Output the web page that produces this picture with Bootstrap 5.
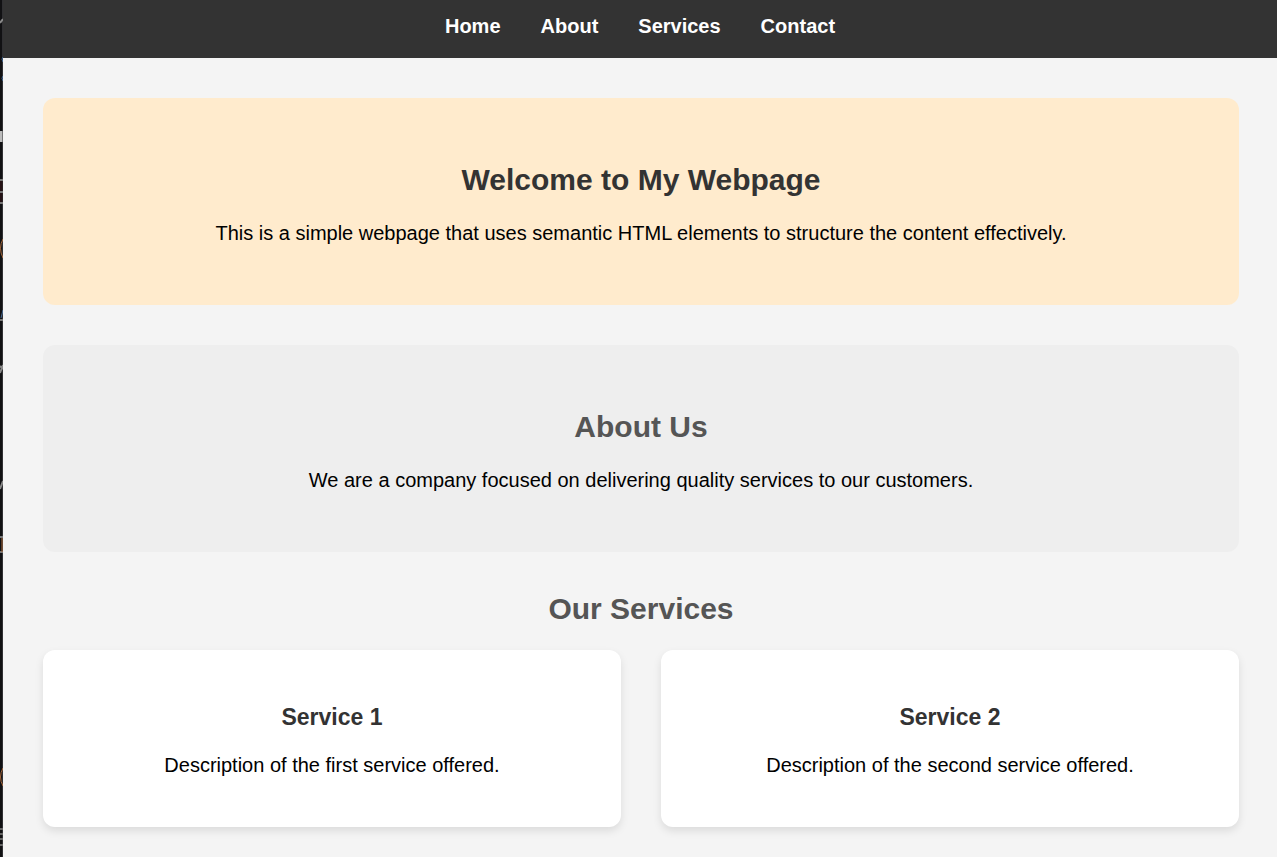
<!DOCTYPE html>
<html lang="en">
<head>
<meta charset="utf-8">
<meta name="viewport" content="width=device-width, initial-scale=1">
<title>My Webpage</title>
<link href="https://cdn.jsdelivr.net/npm/bootstrap@5.3.0/dist/css/bootstrap.min.css" rel="stylesheet">
<style>
body { font-family: "Liberation Sans", Arial, sans-serif; font-size: 20px; line-height: 23px; color: #000; background: #f4f4f4; }
/* Sliver of the neighbouring window along the left edge */
.edge-strip { flex: 0 0 3px; background: linear-gradient(90deg, #111113 2px, #303033 2px); }
.edge-strip path { fill: none; }
.site-header { background: #333; padding: 15px 0 20px; }
.site-nav { gap: 40px; }
.site-nav a { color: #fff; font-weight: 700; text-decoration: none; }
.page-body { padding: 40px 38px 30px 40px; }
.panel { border-radius: 12px; padding: 65px 40px 60px; margin-bottom: 40px; }
.panel-hero { background: #ffebcd; }
.panel-about { background: #eee; }
h1, h2 { font-size: 30px; line-height: 34px; font-weight: 700; margin: 0 0 24px; color: #555; }
h1 { color: #333; }
.panel h1, .panel h2 { margin-bottom: 25px; }
h3 { font-size: 23px; line-height: 27px; font-weight: 700; margin: 0 0 23px; color: #333; }
p { margin: 0; }
.services { gap: 40px; }
.service { flex: 1 1 0; background: #fff; border-radius: 12px; padding: 54px 30px 50px; box-shadow: 0 4px 8px rgba(0,0,0,.1); }
</style>
</head>
<body class="d-flex min-vh-100">
<div class="edge-strip" aria-hidden="true">
<svg class="d-block" width="3" height="857" viewBox="0 0 3 857">
<path stroke="#888" stroke-width="2" d="M0 23l3-4M0 373l3-8M0 366l3 3M0 489l3-8"/>
<path stroke="#666" stroke-width="2" d="M0 829h3M0 834h3M0 839h3M0 845h3"/>
<path stroke="#456a96" d="M3 57q-2 2 0 5M3 76q-2 2 0 5M1 318l2-8"/>
<path stroke="#bbb" stroke-width="3" d="M1 131v11"/>
<path stroke="#251215" stroke-width="3" d="M1 180v22"/>
<path stroke="#777" stroke-width="2" d="M0 180h3M0 192h3M0 203h3M0 320h3M0 537h3M0 552h3"/>
<path stroke="#a8683b" d="M3 239q-5 9 0 19M3 768q-5 9 0 18M2 538v14"/>
</svg>
</div>
<div class="flex-fill">
<header class="site-header">
<nav class="site-nav d-flex justify-content-center" aria-label="Main">
<a href="#home">Home</a><a href="#about">About</a><a href="#services">Services</a><a href="#contact">Contact</a>
</nav>
</header>
<main class="page-body text-center">
<section id="home" class="panel panel-hero"><h1>Welcome to My Webpage</h1><p>This is a simple webpage that uses semantic HTML elements to structure the content effectively.</p></section>
<section id="about" class="panel panel-about"><h2>About Us</h2><p>We are a company focused on delivering quality services to our customers.</p></section>
<section id="services"><h2>Our Services</h2>
<div class="services d-flex">
<article class="service"><h3>Service 1</h3><p>Description of the first service offered.</p></article>
<article class="service"><h3>Service 2</h3><p>Description of the second service offered.</p></article>
</div></section>
</main>
</div>
<script src="https://cdn.jsdelivr.net/npm/bootstrap@5.3.0/dist/js/bootstrap.bundle.min.js"></script>
</body>
</html>
